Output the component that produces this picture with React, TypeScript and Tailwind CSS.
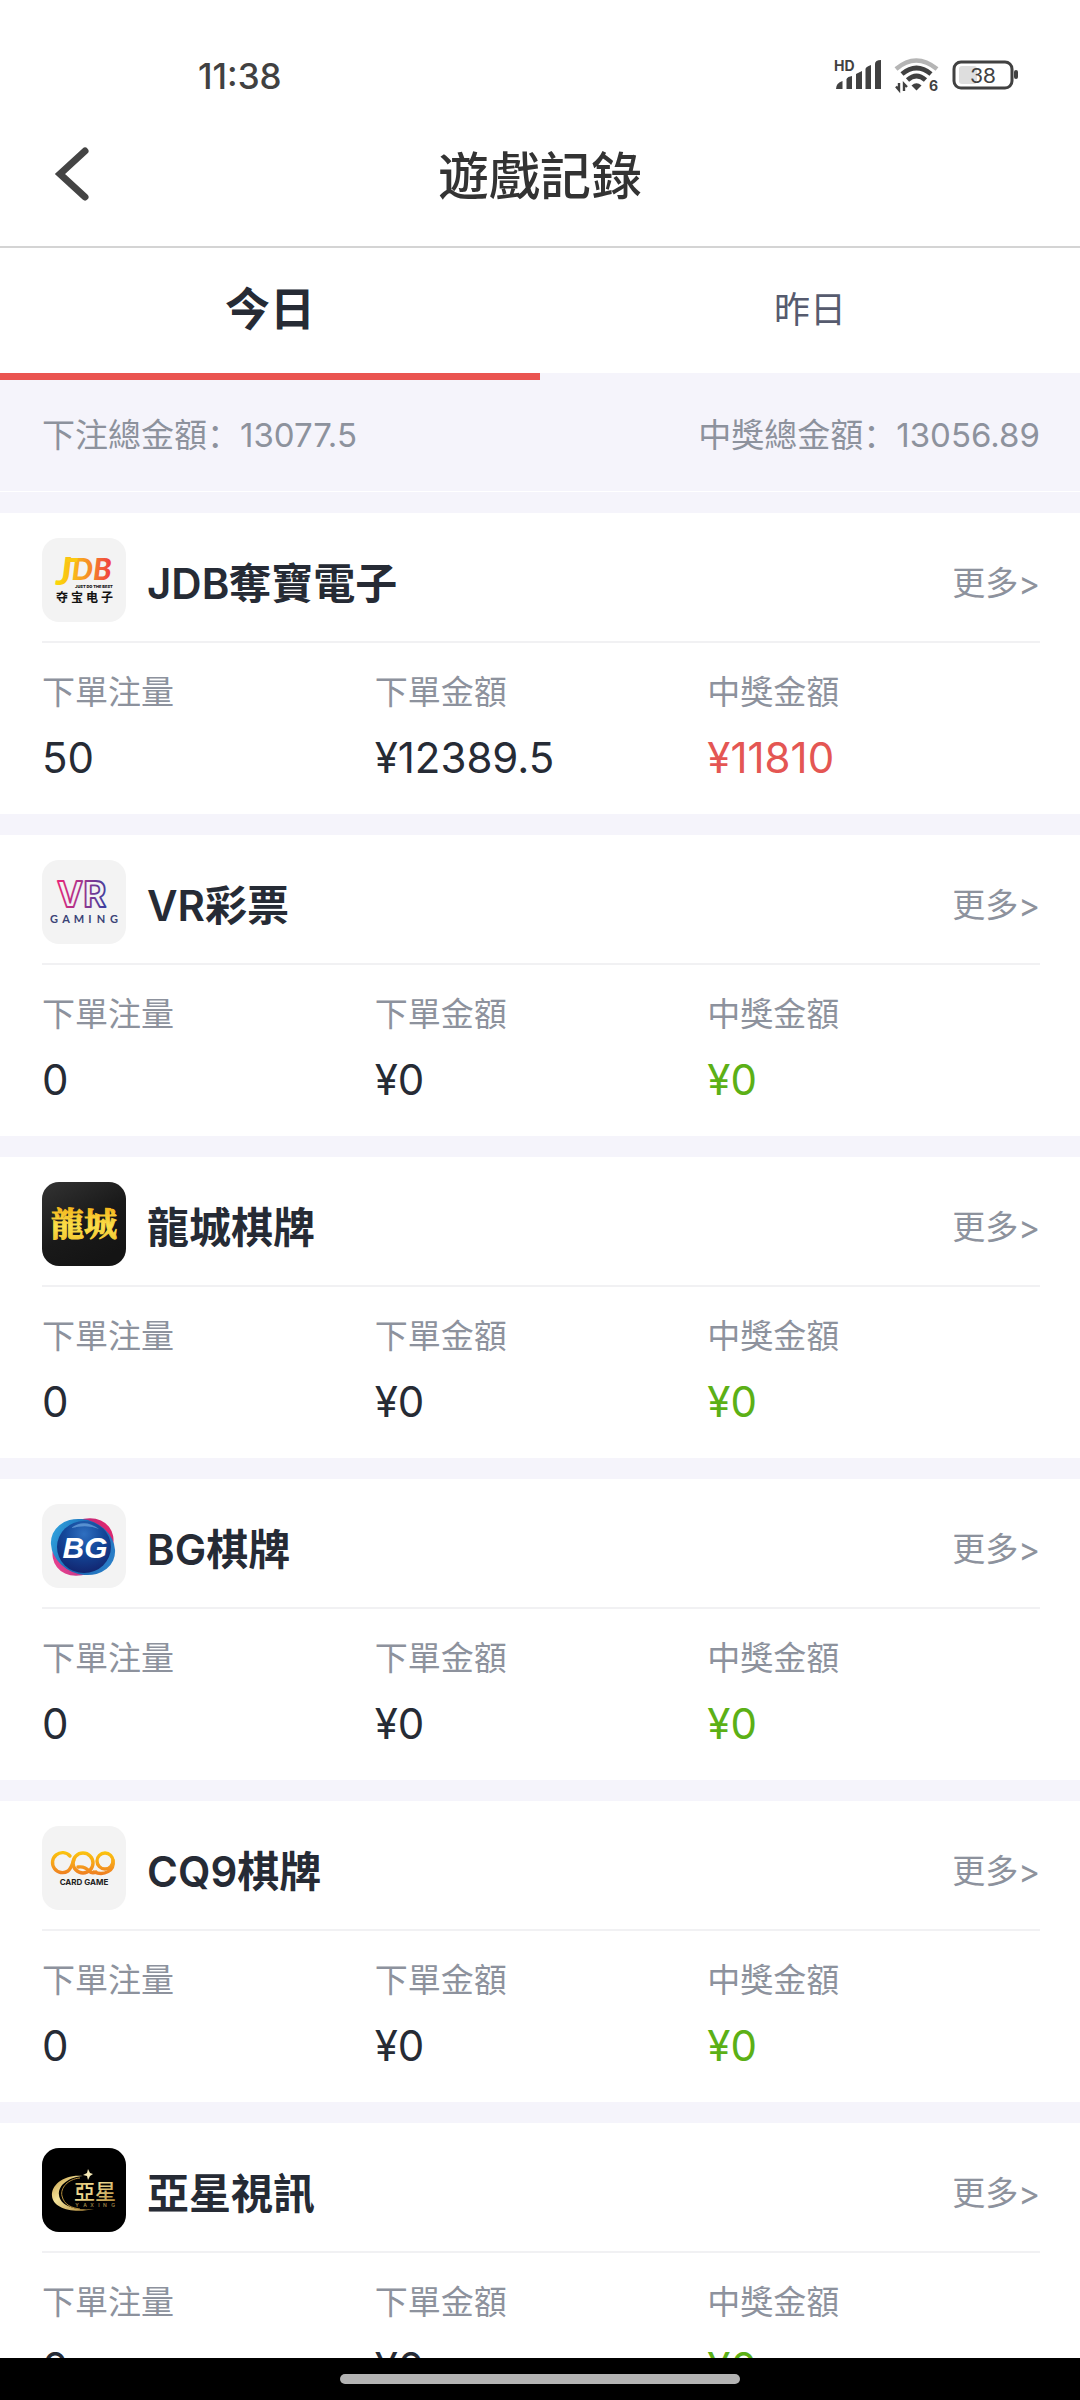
import { useState, type ReactNode } from 'react';

type Platform = {
  name: string;
  logo: ReactNode;
  count: string;
  bet: string;
  win: string;
  lost?: boolean;
};

function LogoBox({ label, children, tone }: { label: string; children: ReactNode; tone: string }) {
  return (
    <svg viewBox="0 0 84 84" role="img" aria-label={label} className="size-[84px] shrink-0">
      <rect width="84" height="84" rx="17" fill={tone} />
      {children}
    </svg>
  );
}

function JdbLogo() {
  return (
    <LogoBox label="JDB" tone="#f3f3f3">
      <defs>
        <linearGradient id="jdb" gradientUnits="userSpaceOnUse" x1="15" y1="30" x2="70" y2="30">
          <stop offset="0" stopColor="#fbd60a" />
          <stop offset="0.35" stopColor="#f9b21c" />
          <stop offset="0.65" stopColor="#f5812b" />
          <stop offset="1" stopColor="#ee3a43" />
        </linearGradient>
      </defs>
      <text x="14" y="47" fill="url(#jdb)" className="font-['Lato'] font-black italic">
        <tspan fontSize="38">J</tspan>
        <tspan fontSize="30" dy="-5">DB</tspan>
      </text>
      <path d="M26 20 H36 L35 24 H24Z" fill="#fbc912" />
      <text x="33" y="50" fontSize="4" fill="#222" className="font-['Inter'] font-black">JUST DO THE BEST</text>
      <g fill="#111" fontSize="12" className="font-['Noto_Sans_CJK_SC',sans-serif] font-bold">
        <text x="14" y="64">夺</text>
        <text x="29" y="64">宝</text>
        <text x="44" y="64">电</text>
        <text x="59" y="64">子</text>
      </g>
    </LogoBox>
  );
}

function VrLogo() {
  return (
    <LogoBox label="VR Gaming" tone="#f3f3f3">
      <defs>
        <linearGradient id="vr" gradientUnits="userSpaceOnUse" x1="15" y1="30" x2="65" y2="36">
          <stop offset="0" stopColor="#e8257a" />
          <stop offset="0.45" stopColor="#a8348c" />
          <stop offset="1" stopColor="#3c3f9f" />
        </linearGradient>
      </defs>
      <text x="15" y="47" fontSize="35" fill="none" stroke="url(#vr)" strokeWidth="1.8" strokeLinejoin="round" className="font-['Inter'] font-bold">VR</text>
      <g fill="#3a4377" fontSize="11" textAnchor="middle" className="font-['Lato'] font-bold">
        <text x="12" y="63">G</text>
        <text x="24" y="63">A</text>
        <text x="37" y="63">M</text>
        <text x="48" y="63">I</text>
        <text x="59" y="63">N</text>
        <text x="72" y="63">G</text>
      </g>
    </LogoBox>
  );
}

function DragonCityLogo() {
  return (
    <LogoBox label="龍城" tone="url(#lcbg)">
      <defs>
        <linearGradient id="lcbg" x1="0" y1="0" x2="0.6" y2="1">
          <stop offset="0" stopColor="#333333" />
          <stop offset="0.6" stopColor="#191919" />
          <stop offset="1" stopColor="#141414" />
        </linearGradient>
        <linearGradient id="lc" x1="0" y1="0" x2="0" y2="1">
          <stop offset="0.2" stopColor="#f4b51b" />
          <stop offset="0.6" stopColor="#fbe04a" />
          <stop offset="1" stopColor="#f3c02c" />
        </linearGradient>
      </defs>
      <text x="9" y="54" fontSize="33" fill="url(#lc)" stroke="url(#lc)" strokeWidth="1" className="font-['Noto_Serif_CJK_TC','Noto_Sans_CJK_TC',sans-serif] font-bold">龍城</text>
    </LogoBox>
  );
}

function BgLogo() {
  return (
    <LogoBox label="BG" tone="#f3f3f3">
      <defs>
        <radialGradient id="bgball" cx="0.5" cy="0.25" r="0.75">
          <stop offset="0" stopColor="#2f6fc0" />
          <stop offset="0.45" stopColor="#144a9c" />
          <stop offset="1" stopColor="#12256f" />
        </radialGradient>
        <linearGradient id="bgpink" x1="0" y1="0" x2="1" y2="0">
          <stop offset="0" stopColor="#e8418e" />
          <stop offset="0.5" stopColor="#8c2b86" />
          <stop offset="1" stopColor="#e0286f" />
        </linearGradient>
        <linearGradient id="bgblue" x1="0" y1="0" x2="1" y2="0">
          <stop offset="0" stopColor="#2f9edb" />
          <stop offset="0.5" stopColor="#1763b0" />
          <stop offset="1" stopColor="#2a7fc8" />
        </linearGradient>
      </defs>
      <ellipse cx="41" cy="43" rx="33" ry="26" fill="url(#bgpink)" transform="rotate(-38 41 43)" />
      <ellipse cx="41" cy="43" rx="33" ry="27" fill="url(#bgblue)" transform="rotate(24 41 43)" />
      <ellipse cx="42" cy="43" rx="27" ry="26" fill="url(#bgball)" />
      <path d="M29 24 Q42 14 57 25 Q46 20 29 24Z" fill="#6fa6e0" opacity="0.7" />
      <text x="43" y="54" fontSize="30" textAnchor="middle" fill="#fff" className="font-['Liberation_Sans'] font-bold italic">BG</text>
    </LogoBox>
  );
}

function CqLogo() {
  return (
    <LogoBox label="CQ9 Card Game" tone="#f3f3f3">
      <defs>
        <linearGradient id="cq" gradientUnits="userSpaceOnUse" x1="0" y1="25" x2="0" y2="49">
          <stop offset="0" stopColor="#fbc50d" />
          <stop offset="0.55" stopColor="#f6a11b" />
          <stop offset="1" stopColor="#ee7d23" />
        </linearGradient>
      </defs>
      <g fill="none" stroke="url(#cq)" strokeWidth="3.4" strokeLinecap="round">
        <path d="M28 30 A10 10 0 1 0 26 45 C29 43 31 36 32 34" />
        <circle cx="41" cy="37" r="10" />
        <path d="M36 41 Q43 40 47 45 Q50 48 54 46" />
        <circle cx="63" cy="35" r="8" />
        <path d="M71 34 C73 45 62 50 52 46" />
      </g>
      <text x="42" y="59" fontSize="8" textAnchor="middle" fill="#222" className="font-['Inter'] font-bold">CARD GAME</text>
    </LogoBox>
  );
}

function YaxingLogo() {
  return (
    <LogoBox label="亞星" tone="#000">
      <defs>
        <linearGradient id="yx" x1="0" y1="0" x2="1" y2="1">
          <stop offset="0" stopColor="#c39a42" />
          <stop offset="0.4" stopColor="#f4e39b" />
          <stop offset="1" stopColor="#a97f2e" />
        </linearGradient>
      </defs>
      <path d="M41 28 C22 26 9 37 10 48 C11 60 30 66 52 61 C34 63 18 58 17 47 C16 37 27 29 41 28Z" fill="url(#yx)" />
      <path d="M38 30 C26 31 18 40 20 48 C22 57 30 60 38 61" fill="none" stroke="#b48d3c" strokeWidth="1" />
      <path d="M46 21 L48 25 L51 26 L48 28 L46 32 L45 28 L41 27 L45 25Z" fill="#f8ebb8" />
      <text x="32" y="51" fontSize="21" fill="url(#yx)" className="font-['Noto_Sans_CJK_TC',sans-serif] font-medium">亞星</text>
      <g fill="#9d8244" fontSize="5" textAnchor="middle" className="font-['Inter'] font-semibold">
        <text x="35" y="59">Y</text>
        <text x="43" y="59">A</text>
        <text x="50" y="59">X</text>
        <text x="57" y="59">I</text>
        <text x="63" y="59">N</text>
        <text x="71" y="59">G</text>
      </g>
    </LogoBox>
  );
}

const platforms: Platform[] = [
  { name: 'JDB奪寶電子', logo: <JdbLogo />, count: '50', bet: '¥12389.5', win: '¥11810', lost: true },
  { name: 'VR彩票', logo: <VrLogo />, count: '0', bet: '¥0', win: '¥0' },
  { name: '龍城棋牌', logo: <DragonCityLogo />, count: '0', bet: '¥0', win: '¥0' },
  { name: 'BG棋牌', logo: <BgLogo />, count: '0', bet: '¥0', win: '¥0' },
  { name: 'CQ9棋牌', logo: <CqLogo />, count: '0', bet: '¥0', win: '¥0' },
  { name: '亞星視訊', logo: <YaxingLogo />, count: '0', bet: '¥0', win: '¥0' },
];

function StatusBar() {
  return (
    <div className="flex h-[108px] items-center justify-between pt-[42px] pr-[60px] pl-[198px] text-[#414141]">
      <span className="pt-0.5 font-['Inter'] text-[35px] leading-[48px] font-medium">11:38</span>
      <div className="flex items-center gap-3">
        <svg viewBox="0 0 48 36" className="h-9 w-12 overflow-visible" fill="currentColor" aria-label="HD signal">
          <text x="0" y="14" fontSize="14" className="font-['Inter'] font-bold">HD</text>
          <path d="M2 32 Q2 26 8.500 24 V32Z" strokeLinejoin="round" />
          <path d="M12.500 32 V22.500 Q12.500 21 14.500 20 L18 19 V32Z" />
          <path d="M22 32 V17 L28 14 V32Z" />
          <path d="M31.500 32 V12 Q31.500 10 37 8 V32Z" />
          <path d="M41 32 V7 Q41 3 47 3 V32Z" />
        </svg>
        <svg viewBox="0 0 46 36" className="h-9 w-[46px] overflow-visible" fill="none" stroke="currentColor" aria-label="Wi-Fi 6">
          <path d="M2 12 Q22 -5 43 12" stroke="#b5b5b5" strokeWidth="4.500" />
          <path d="M8 17 Q22.500 5 37 17" strokeWidth="4.800" />
          <path d="M13.500 23 Q22.500 15 31.500 23" strokeWidth="4.800" />
          <path d="M17.500 28.500 Q22.500 24 27.500 28.500 L22.500 33.500Z" fill="currentColor" stroke="none" />
          <path d="M5 26 V33 L2 29.500 M10 34 V27 L13 30" strokeWidth="2.400" />
          <text x="35" y="34" fontSize="14" stroke="none" fill="currentColor" className="font-['Inter'] font-bold">6</text>
        </svg>
        <svg viewBox="0 0 68 32" className="h-8 w-[68px]" fill="none" aria-label="Battery 38%">
          <rect x="2" y="3" width="58" height="26" rx="7" stroke="currentColor" strokeWidth="3" />
          <rect x="7" y="7" width="18" height="18" rx="3" fill="#dedede" />
          <rect x="62" y="11" width="4" height="9" rx="2" fill="currentColor" />
          <text x="31" y="24" fontSize="22" textAnchor="middle" fill="currentColor" className="font-['Lato']">38</text>
        </svg>
      </div>
    </div>
  );
}

function Stat({ label, value, tone }: { label: string; value: string; tone: string }) {
  return (
    <div className="flex flex-col gap-[14px]">
      <dt className="text-[33px] leading-[48px] text-[#8d929d]">{label}</dt>
      <dd className={`font-['Inter'] text-[42px] leading-[60px] ${tone}`}>{value}</dd>
    </div>
  );
}

function PlatformCard({ item }: { item: Platform }) {
  return (
    <li className="bg-white pt-[25px] pr-10 pb-[26px] pl-[42px]">
      <div className="flex items-center border-b-2 border-[#f1f1f3] pb-[19px]">
        {item.logo}
        <h2 className="ml-[21px] flex-1 pt-2 font-['Inter','Noto_Sans_CJK_SC',sans-serif] text-[42px] leading-[60px] font-semibold text-[#262b35]">
          {item.name}
        </h2>
        <a href="#more" className="pt-1 text-[33px] leading-[48px] text-[#8d929d]">
          更多<span className="font-['Inter']">&gt;</span>
        </a>
      </div>
      <dl className="grid grid-cols-3 pt-[23px]">
        <Stat label="下單注量" value={item.count} tone="text-[#262b35]" />
        <Stat label="下單金額" value={item.bet} tone="text-[#262b35]" />
        <Stat label="中獎金額" value={item.win} tone={item.lost ? 'text-[#e45653]' : 'text-[#5cb016]'} />
      </dl>
    </li>
  );
}

export default function App() {
  const [tab, setTab] = useState(0);
  return (
    <div lang="zh-Hans" className="flex h-screen flex-col bg-white font-['Noto_Sans_CJK_SC',sans-serif]">
      <StatusBar />
      <header className="border-b-2 border-[#d4d4d4] pb-1.5">
        <div className="grid h-[132px] grid-cols-[1fr_auto_1fr] items-center">
          <button type="button" aria-label="返回" className="ml-[54px] w-fit text-[#444]">
            <svg viewBox="0 0 36 56" className="h-14 w-9" fill="none" stroke="currentColor" strokeWidth="7" strokeLinecap="round">
              <path d="M31 5 L6 28 L31 51" />
            </svg>
          </button>
          <h1 className="pb-0.5 text-[51px] leading-[72px] font-medium text-[#333]">遊戲記錄</h1>
        </div>
      </header>
      <div role="tablist" className="grid grid-cols-2 bg-[#f5f4fb]">
        {['今日', '昨日'].map((name, i) => (
          <div key={name}>
            <button
              type="button"
              role="tab"
              aria-selected={tab === i}
              onClick={() => setTab(i)}
              className={`h-[125px] w-full bg-white pb-2 ${tab === i ? 'text-[45px] font-bold text-[#262b35]' : 'text-[36px] text-[#565b6e]'}`}
            >
              {name}
            </button>
            <div className={`h-[7px] ${tab === i ? 'bg-[#ea5450]' : ''}`} />
          </div>
        ))}
      </div>
      <div className="flex h-[112px] items-center justify-between border-b border-white bg-[#f5f4fb] pr-10 pb-1 pl-[42px] text-[33px] leading-[48px] text-[#8d929d]">
        <p>
          下注總金額：<span className="font-['Inter']">13077.5</span>
        </p>
        <p>
          中獎總金額：<span className="font-['Inter']">13056.89</span>
        </p>
      </div>
      <main className="min-h-0 flex-1 overflow-y-auto bg-[#f5f4fb] pt-[21px] [scrollbar-width:none]">
        <ul className="flex flex-col gap-[21px]">
          {platforms.map((p) => (
            <PlatformCard key={p.name} item={p} />
          ))}
        </ul>
      </main>
      <div className="flex h-[42px] shrink-0 items-center justify-center bg-black">
        <div className="h-[10px] w-[37%] rounded-full bg-[#b3b3b3]" />
      </div>
    </div>
  );
}
